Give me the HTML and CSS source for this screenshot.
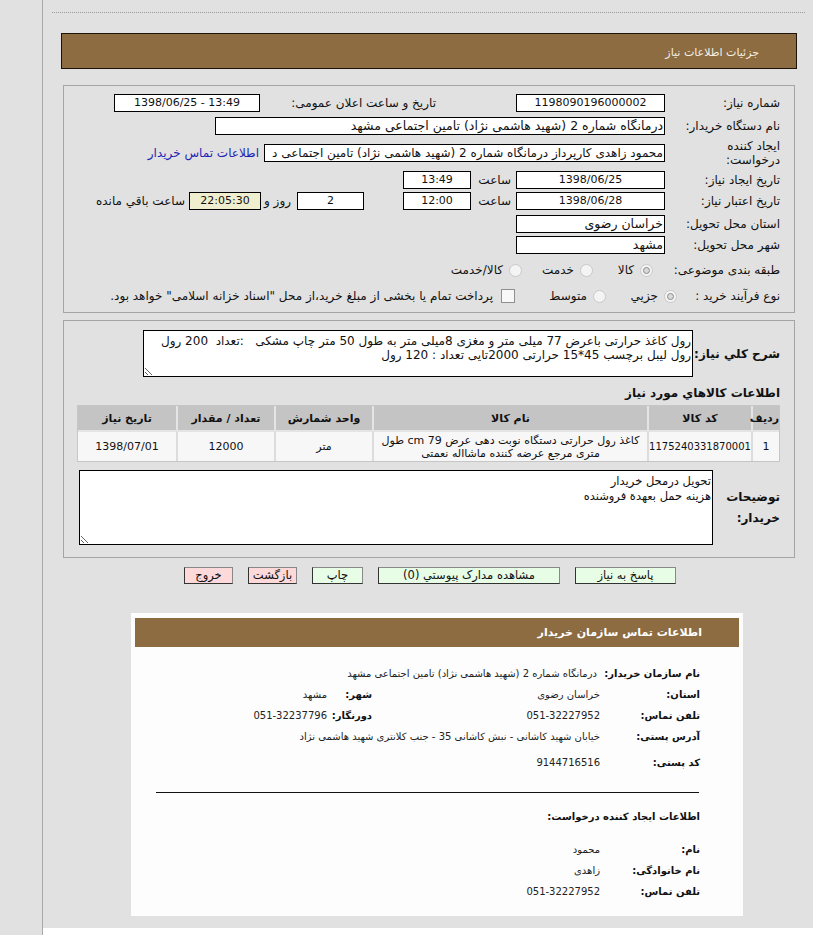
FILE: index.html
```html
<!DOCTYPE html>
<html lang="fa" dir="rtl">
<head>
<meta charset="utf-8">
<title>جزئیات اطلاعات نیاز</title>
<link rel="stylesheet" href="styles.css">
</head>
<body>
<div class="page">
  <div class="gutter"></div>
  <main class="main">
    <div class="dots"></div>
    <div class="titlebar">جزئیات اطلاعات نیاز</div>

    <section class="panel p1">
      <div class="row r1">
        <div class="lbl">شماره نیاز:</div>
        <div class="box w148 c">1198090196000002</div>
        <div class="lbl2">تاریخ و ساعت اعلان عمومی:</div>
        <div class="box w146 c ltr">1398/06/25 - 13:49</div>
      </div>
      <div class="row r2">
        <div class="lbl">نام دستگاه خریدار:</div>
        <div class="box w449 fa">درمانگاه شماره 2 (شهید هاشمی نژاد) تامین اجتماعی مشهد</div>
      </div>
      <div class="row r3">
        <div class="lbl two">ایجاد کننده<br>درخواست:</div>
        <div class="box w400 fa fit">محمود زاهدی کارپرداز درمانگاه شماره 2 (شهید هاشمی نژاد) تامین اجتماعی د</div>
        <a class="link" href="#">اطلاعات تماس خریدار</a>
      </div>
      <div class="row r4">
        <div class="lbl">تاریخ ایجاد نیاز:</div>
        <div class="box w148 c">1398/06/25</div>
        <div class="unit">ساعت</div>
        <div class="box w68 c">13:49</div>
      </div>
      <div class="row r5">
        <div class="lbl">تاریخ اعتبار نیاز:</div>
        <div class="box w148 c">1398/06/28</div>
        <div class="unit">ساعت</div>
        <div class="box w68 c">12:00</div>
        <div class="box w67 c days">2</div>
        <div class="unit u2">روز و</div>
        <div class="box w72 c remain">22:05:30</div>
        <div class="txt">ساعت باقي مانده</div>
      </div>
      <div class="row r6">
        <div class="lbl">استان محل تحویل:</div>
        <div class="box w148 fa">خراسان رضوی</div>
      </div>
      <div class="row r7">
        <div class="lbl">شهر محل تحویل:</div>
        <div class="box w148 fa">مشهد</div>
      </div>
      <div class="row r8">
        <div class="lbl">طبقه بندی موضوعی:</div>
        <div class="opt o1"><span class="radio on"></span>کالا</div>
        <div class="opt o2"><span class="radio"></span>خدمت</div>
        <div class="opt"><span class="radio"></span>کالا/خدمت</div>
      </div>
      <div class="row r9">
        <div class="lbl l9">نوع فرآیند خرید :</div>
        <div class="opt o3"><span class="radio on"></span>جزیي</div>
        <div class="opt o4"><span class="radio"></span>متوسط</div>
        <div class="opt"><span class="check"></span>پرداخت تمام یا بخشی از مبلغ خرید،از محل "اسناد خزانه اسلامی" خواهد بود.</div>
      </div>
    </section>

    <section class="panel p2">
      <div class="desc-row">
        <div class="blbl">شرح کلي نیاز:</div>
        <textarea class="area a1" readonly>رول کاغذ حرارتی باعرض 77 میلی متر و مغزی 8میلی متر به طول 50 متر چاپ مشکی   :تعداد  200 رول
رول لیبل برچسب 45*15 حرارتی 2000تایی تعداد : 120 رول</textarea>
      </div>
      <h3 class="sub">اطلاعات کالاهاي مورد نیاز</h3>
      <table class="items">
        <thead>
          <tr>
            <th class="c1">ردیف</th>
            <th class="c2">کد کالا</th>
            <th class="c3">نام کالا</th>
            <th class="c4">واحد شمارش</th>
            <th class="c5">تعداد / مقدار</th>
            <th class="c6">تاریخ نیاز</th>
          </tr>
        </thead>
        <tbody>
          <tr>
            <td>1</td>
            <td class="code">1175240331870001</td>
            <td class="name">کاغذ رول حرارتی دستگاه نوبت دهی عرض 79 cm طول<br>متری مرجع عرضه کننده ماشااله نعمتی</td>
            <td>متر</td>
            <td>12000</td>
            <td>1398/07/01</td>
          </tr>
        </tbody>
      </table>
      <div class="desc-row notes">
        <div class="blbl two">توضیحات<br>خریدار:</div>
        <textarea class="area a2" readonly>تحویل درمحل خریدار
هزینه حمل بعهدة فروشنده</textarea>
      </div>
    </section>

    <div class="buttons">
      <button class="btn g b1">پاسخ به نیاز</button>
      <button class="btn g b2">مشاهده مدارک پیوستي (0)</button>
      <button class="btn g b3">چاپ</button>
      <button class="btn r b4">بازگشت</button>
      <button class="btn r b5">خروج</button>
    </div>

    <section class="card">
      <div class="cardhead">اطلاعات تماس سازمان خریدار</div>
      <div class="info">
        <div class="irow first">
          <div class="ik">نام سازمان خریدار:</div>
          <div class="iv wide">درمانگاه شماره 2 (شهید هاشمی نژاد) تامین اجتماعی مشهد</div>
        </div>
        <div class="irow">
          <div class="ik">استان:</div>
          <div class="iv">خراسان رضوی</div>
          <div class="ik k2">شهر:</div>
          <div class="iv">مشهد</div>
        </div>
        <div class="irow">
          <div class="ik">تلفن تماس:</div>
          <div class="iv">051-32227952</div>
          <div class="ik k2">دورنگار:</div>
          <div class="iv">051-32237796</div>
        </div>
        <div class="irow">
          <div class="ik">آدرس پستی:</div>
          <div class="iv wide">خیابان شهید کاشانی - نبش کاشانی 35 - جنب کلانتری شهید هاشمی نژاد</div>
        </div>
        <div class="irow post">
          <div class="ik">کد پستی:</div>
          <div class="iv">9144716516</div>
        </div>
      </div>
      <hr class="rule">
      <div class="info">
        <div class="ihead">اطلاعات ایجاد کننده درخواست:</div>
        <div class="irow cfirst">
          <div class="ik">نام:</div>
          <div class="iv">محمود</div>
        </div>
        <div class="irow">
          <div class="ik">نام خانوادگی:</div>
          <div class="iv">زاهدی</div>
        </div>
        <div class="irow">
          <div class="ik">تلفن تماس:</div>
          <div class="iv">051-32227952</div>
        </div>
      </div>
    </section>
  </main>
</div>
</body>
</html>
```

FILE: styles.css
```css
html, body {
  margin: 0;
  padding: 0;
  background: #ffffff;
}
body {
  font-family: "DejaVu Sans", sans-serif;
  font-size: 12px;
  color: #111;
}
.page {
  display: flex;
  direction: ltr;
  min-height: 935px;
}
.gutter {
  width: 42px;
  flex: none;
  background: #e1e1e1;
  border-right: 1px solid #a9a9a9;
}
.main {
  direction: rtl;
  flex: 1;
  min-width: 0;
  overflow: hidden;
  align-self: flex-start;
  background: #e1e1e1;
  padding-bottom: 12px;
}
.dots {
  margin: 12px 8px 0 9px;
  border-top: 1px dotted #9a9a9a;
  height: 0;
}
.titlebar {
  margin: 20px 16px 0 18px;
  height: 36px;
  box-sizing: border-box;
  background: #8c6c40;
  border: 1px solid #1b1208;
  color: #f4efe6;
  font-size: 11px;
  padding: 12px 37px 0 0;
}
.panel {
  margin: 0 18px 0 20px;
  border: 1px solid #a5a5a5;
  box-sizing: border-box;
}
.p1 {
  margin-top: 16px;
  padding: 8px 14px 8px 8px;
  height: 228px;
}
.row {
  display: flex;
  align-items: center;
  height: 18px;
}
.r2 { margin-top: 5px; }
.r3 { margin-top: 4px; height: 28px; }
.r4 { margin-top: 4px; }
.r5 { margin-top: 3px; }
.r6 { margin-top: 5px; }
.r7 { margin-top: 3px; }
.r8 { margin-top: 8px; height: 16px; }
.r9 { margin-top: 10px; height: 16px; }
.lbl {
  width: 115px;
  flex: none;
  white-space: nowrap;
}
.lbl.two { line-height: 14px; }
.lbl.l9 { width: 103px; }
.lbl2 {
  width: 172px;
  margin-right: 80px;
  flex: none;
  white-space: nowrap;
}
.box {
  height: 18px;
  box-sizing: border-box;
  border: 1px solid #000;
  background: #fff;
  line-height: 16px;
  padding: 0 2px;
  white-space: nowrap;
  overflow: hidden;
  flex: none;
  font-size: 11px;
}
.box.fa { font-size: 12.5px; padding: 0 1px; }
.box.fa.fit { font-size: 12px; letter-spacing: -0.1px; }
.box.c { text-align: center; }
.ltr { direction: ltr; }
.w148 { width: 149px; }
.w146 { width: 146px; margin-right: 4px; }
.w449 { width: 450px; }
.w400 { width: 401px; }
.w68 { width: 68px; }
.w67 { width: 67px; }
.w72 { width: 72px; }
.days { margin-right: 39px; }
.remain { background: #efefcf; }
.link {
  color: #1f1fb5;
  text-decoration: none;
  margin-right: 5px;
  white-space: nowrap;
}
.unit {
  width: 45px;
  flex: none;
  box-sizing: border-box;
  padding-right: 5px;
}
.unit.u2 { width: 36px; padding-right: 6px; }
.txt { margin-right: 4px; white-space: nowrap; }
.opt {
  display: flex;
  align-items: center;
  flex: none;
  white-space: nowrap;
}
.o1 { width: 60px; margin-right: 12px; }
.o2 { width: 71px; }
.o3 { width: 71px; }
.o4 { width: 91px; }
.radio {
  width: 11px;
  height: 11px;
  border-radius: 50%;
  border: 1px solid #c9c9c9;
  background: #f4f4f4;
  margin-left: 6px;
  position: relative;
  flex: none;
}
.radio.on::after {
  content: "";
  position: absolute;
  left: 2px;
  top: 2px;
  width: 5px;
  height: 5px;
  border-radius: 50%;
  border: 1px solid #8a8a8a;
  background: #dadada;
}
.check {
  width: 12px;
  height: 12px;
  border: 1px solid #8f8f8f;
  background: #f8f8f8;
  margin-left: 8px;
  flex: none;
}
.p2 {
  margin-top: 7px;
  height: 238px;
  padding: 9px 14px 0 15px;
}
.desc-row {
  display: flex;
  align-items: center;
}
.blbl {
  width: 87px;
  flex: none;
  font-weight: bold;
  font-size: 12px;
  white-space: nowrap;
}
.blbl.two { width: 67px; line-height: 21px; }
.area {
  display: block;
  box-sizing: border-box;
  border: 1px solid #000;
  background: #fff;
  font-family: "DejaVu Sans", sans-serif;
  font-size: 12px;
  line-height: 14px;
  color: #111;
  padding: 3px 1px;
  margin: 0;
  resize: both;
  overflow: hidden;
  white-space: pre;
}
.a1 { width: 550px; height: 47px; }
.a2 { width: 635px; height: 75px; line-height: 15px; font-size: 11.5px; }
.sub {
  margin: 9px 0 0 0;
  font-size: 12px;
  font-weight: bold;
  height: 16px;
}
.items {
  margin-top: 3px;
  width: 701px;
  table-layout: fixed;
  border: 1px solid #c6c6c6;
  border-collapse: separate;
  border-spacing: 0;
  background: #f7f7f7;
}
.items th {
  background: #c4c4c4;
  font-weight: bold;
  font-size: 11px;
  height: 24px;
  border-left: 2px solid #e4e4e4;
  border-bottom: 2px solid #e4e4e4;
  padding: 0;
}
.items td {
  font-size: 11px;
  text-align: center;
  height: 29px;
  border-left: 2px solid #dcdcdc;
  padding: 0 3px;
  line-height: 13px;
}
.items th:last-child, .items td:last-child { border-left: none; }
.items td.name { padding: 0 4px; white-space: nowrap; }
.items td.code { font-size: 10px; padding: 0; }
.c1 { width: 26px; }
.c2 { width: 102px; }
.c3 { width: 273px; }
.c4 { width: 96px; }
.c5 { width: 96px; }
.c6 { width: 98px; }
.notes { margin-top: 8px; }
.buttons {
  display: flex;
  justify-content: center;
  margin-top: 9px;
  gap: 15px;
  padding-left: 4px;
}
.btn {
  height: 17px;
  box-sizing: border-box;
  border: 1px solid #333;
  border-top-color: #888;
  border-right-color: #888;
  font-family: "DejaVu Sans", sans-serif;
  font-size: 11.5px;
  line-height: 15px;
  padding: 0;
  color: #111;
}
.btn.g { background: #e8fde6; }
.btn.r { background: #fdd9d9; }
.b1 { width: 101px; }
.b2 { width: 182px; }
.b3 { width: 51px; }
.b4 { width: 49px; }
.b5 { width: 49px; }
.card {
  margin: 29px 70px 0 88px;
  background: #fdfdfd;
  padding: 5px 4px 0 4px;
  height: 303px;
  box-sizing: border-box;
}
.cardhead {
  height: 29px;
  background: #8c6c40;
  color: #fff;
  font-weight: bold;
  font-size: 11px;
  line-height: 29px;
  padding-right: 37px;
}
.info {
  padding: 0 39px 0 0;
}
.irow {
  display: flex;
  height: 21px;
  align-items: center;
  font-size: 10px;
}
.irow.first { margin-top: 16px; }
.irow.post { margin-top: 5px; }
.ik {
  width: 100px;
  flex: none;
  font-weight: bold;
  font-size: 10px;
  white-space: nowrap;
}
.iv {
  width: 228px;
  flex: none;
  white-space: nowrap;
  color: #222;
}
.iv.wide { width: auto; }
.irow.first .iv { margin-right: 3px; }
.ik.k2 { width: 45px; }
.rule {
  margin: 19px 40px 0 21px;
  border: none;
  border-top: 1px solid #111;
  height: 0;
}
.ihead {
  margin-top: 18px;
  height: 16px;
  font-weight: bold;
  font-size: 10px;
}
.irow.cfirst { margin-top: 12px; }
```
